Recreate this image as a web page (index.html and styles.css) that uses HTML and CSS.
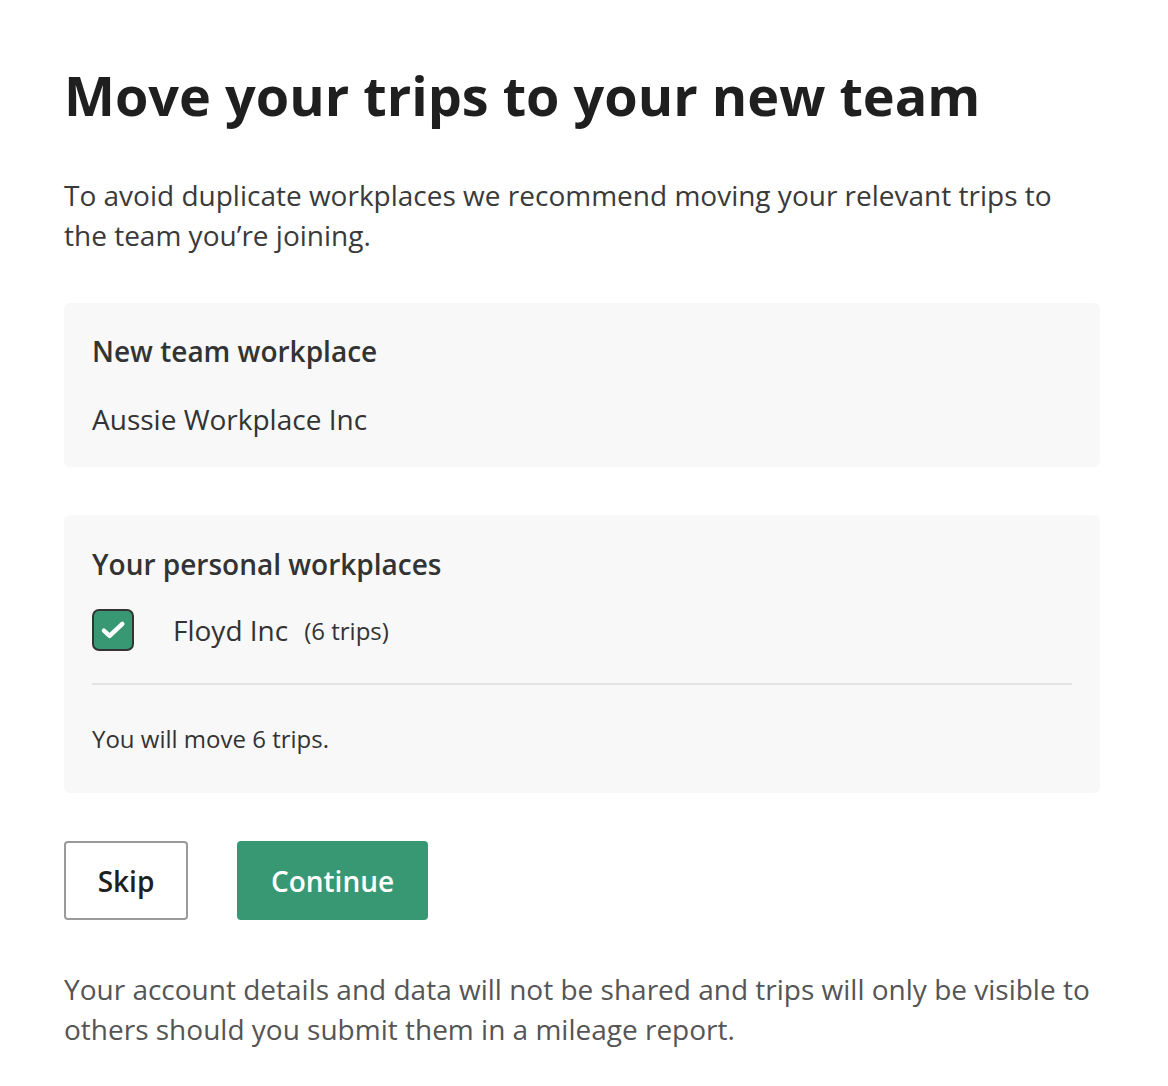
FILE: index.html
```html
<!DOCTYPE html>
<html lang="en">
<head>
<meta charset="utf-8">
<title>Move your trips</title>
<link rel="stylesheet" href="styles.css">
</head>
<body>
<main class="page">
  <h1 class="title">Move your trips to your new team</h1>
  <p class="intro">To avoid duplicate workplaces we recommend moving your relevant trips to the team you’re joining.</p>

  <section class="card card-team">
    <h2 class="card-title">New team workplace</h2>
    <p class="card-value">Aussie Workplace Inc</p>
  </section>

  <section class="card card-personal">
    <h2 class="card-title">Your personal workplaces</h2>
    <label class="option">
      <span class="checkbox">
        <svg viewBox="0 0 24 24" width="28" height="28" aria-hidden="true"><path d="M4.2 12.6l4.9 4.4L20 6.8" fill="none" stroke="#fff" stroke-width="3.8" stroke-linecap="round" stroke-linejoin="round"/></svg>
      </span>
      <span class="option-name">Floyd Inc</span>
      <span class="option-count">(6 trips)</span>
    </label>
    <hr class="divider">
    <p class="summary">You will move 6 trips.</p>
  </section>

  <div class="actions">
    <button class="btn btn-skip">Skip</button>
    <button class="btn btn-continue">Continue</button>
  </div>

  <p class="footnote">Your account details and data will not be shared and trips will only be visible to others should you submit them in a mileage report.</p>
</main>
</body>
</html>
```
FILE: styles.css
```css
* { box-sizing: border-box; }
html, body { margin: 0; padding: 0; background: #fff; }
body { font-family: "Open Sans", "Noto Sans", sans-serif; color: #333; }

.page {
  width: 1100px;
  padding: 61px 0 0 64px;
  display: flex;
  flex-direction: column;
}

.title {
  margin: 0;
  font-size: 54px;
  line-height: 68px;
  font-weight: 700;
  color: #1f1f1f;
}

.intro {
  margin: 46px 0 0;
  font-size: 28px;
  line-height: 40px;
  color: #3a3a3a;
  width: 1010px;
}

.card {
  background: #f8f8f8;
  border-radius: 6px;
  padding: 28px 28px 0;
}

.card-team { margin-top: 48px; height: 164px; }
.card-personal { margin-top: 48px; height: 278px; }

.card-personal .card-title { margin-top: 1px; }

.card-title {
  margin: 0;
  font-size: 28px;
  line-height: 40px;
  font-weight: 600;
  color: #333;
}

.card-value {
  margin: 28px 0 0;
  font-size: 28px;
  line-height: 40px;
  color: #333;
}

.option {
  display: flex;
  align-items: center;
  margin-top: 25px;
  height: 42px;
}

.checkbox {
  width: 42px;
  height: 42px;
  border: 2px solid #333;
  border-radius: 7px;
  background: #389874;
  display: flex;
  align-items: center;
  justify-content: center;
}

.option-name {
  margin-left: 39px;
  font-size: 28px;
  color: #333;
}

.option-count {
  margin-left: 16px;
  font-size: 24px;
  color: #333;
}

.divider {
  margin: 32px 0 0;
  border: 0;
  height: 2px;
  background: #e3e3e3;
}

.summary {
  margin: 37px 0 0;
  font-size: 24px;
  line-height: 34px;
  color: #333;
}

.actions {
  display: flex;
  gap: 49px;
  margin-top: 48px;
}

.btn {
  font-family: "Open Sans", "Noto Sans", sans-serif;
  height: 79px;
  border-radius: 4px;
  font-weight: 600;
  cursor: pointer;
}

.btn-skip {
  width: 124px;
  background: #fff;
  border: 2px solid #9a9a9a;
  font-size: 28px;
  color: #1f1f1f;
}

.btn-continue {
  width: 191px;
  background: #389874;
  border: 0;
  font-size: 28px;
  color: #fff;
}

.footnote {
  margin: 49px 0 0;
  font-size: 28px;
  line-height: 40px;
  color: #555;
  width: 1040px;
  font-stretch: 94%;
}
```
